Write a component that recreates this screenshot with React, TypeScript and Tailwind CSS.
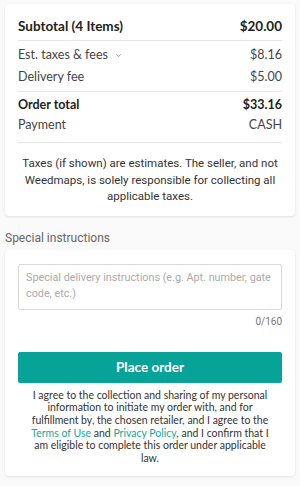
import { ChevronDown } from 'lucide-react'

const lato = { fontFamily: 'Lato, "Open Sans", sans-serif' }
const roboto = { fontFamily: 'Roboto, sans-serif' }

function Row({ label, value, bold, chevron, h = 'h-[22px]' }: { label: string; value: string; bold?: boolean; chevron?: boolean; h?: string }) {
  return (
    <div className={`flex items-center justify-between ${h} ${bold ? 'font-bold text-[#222]' : 'text-[#444]'} text-[12.5px]`}>
      <span className="flex items-center gap-[6px]">
        {label}
        {chevron && <ChevronDown className="w-[9px] h-[9px] text-[#888]" strokeWidth={2} />}
      </span>
      <span>{value}</span>
    </div>
  )
}

export default function App() {
  return (
    <div className="min-h-[486px] bg-[#fafafa] px-[5px] pt-[4px]" style={lato}>
      <div className="bg-white rounded-[4px] shadow-[0_1px_3px_rgba(0,0,0,0.1)] px-[13px] pt-[12px] pb-[11px]">
        <div className="flex items-center justify-between h-[20px] font-bold text-[13.5px] text-[#222]">
          <span>Subtotal (4 Items)</span>
          <span>$20.00</span>
        </div>
        <div className="mt-[4px] border-t border-[#e6e6e6]" />
        <div className="mt-[3px]">
          <Row label="Est. taxes & fees" value="$8.16" chevron />
          <Row label="Delivery fee" value="$5.00" />
        </div>
        <div className="mt-[3px] border-t border-[#e6e6e6]" />
        <div className="mt-[3px]">
          <Row label="Order total" value="$33.16" bold h="h-[20px]" />
          <Row label="Payment" value="CASH" h="h-[20px]" />
        </div>
        <div className="mt-[7px] border-t border-[#e6e6e6]" />
        <p className="mt-[12px] text-center text-[11.5px] leading-[16.5px] text-[#333] px-[2px]" style={roboto}>
          Taxes (if shown) are estimates. The seller, and not Weedmaps, is solely responsible for collecting all applicable taxes.
        </p>
      </div>

      <div className="mt-[15px] text-[12px] text-[#666] h-[14px] leading-[14px]" style={roboto}>
        Special instructions
      </div>

      <div className="mt-[5px] bg-white rounded-[4px] shadow-[0_1px_3px_rgba(0,0,0,0.1)] px-[13px] pt-[14px] pb-[11px]">
        <textarea
          className="block w-full h-[46px] resize-none rounded-[2px] border border-[#d9d9d9] pl-[7px] pr-[2px] py-[5px] text-[10.8px] leading-[16px] text-[#333] placeholder:text-[#aaa] outline-none"
          style={roboto}
          placeholder="Special delivery instructions (e.g. Apt. number, gate code, etc.)"
        />
        <div className="mt-[4px] text-right text-[10px] text-[#777]" style={roboto}>0/160</div>
        <button className="mt-[23px] w-full h-[31px] rounded-[2px] bg-[#07a398] text-white font-bold text-[13.5px]">
          Place order
        </button>
        <p className="mt-[6px] text-center text-[10.5px] leading-[12.7px] text-[#333] px-[10px]">
          I agree to the collection and sharing of my personal information to initiate my order with, and for fulfillment by, the chosen retailer, and I agree to the{' '}
          <span className="text-[#13a89e]">Terms&nbsp;of&nbsp;Use</span> and{' '}
          <span className="text-[#13a89e]">Privacy&nbsp;Policy</span>, and I confirm that I am eligible to complete this order under applicable law.
        </p>
      </div>
    </div>
  )
}
